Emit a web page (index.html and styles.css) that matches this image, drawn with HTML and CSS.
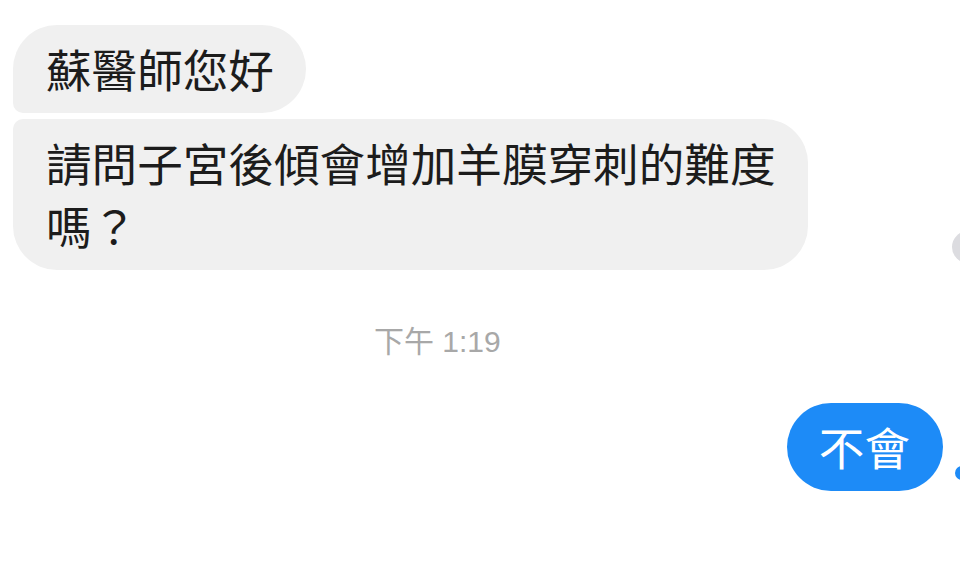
FILE: index.html
```html
<!DOCTYPE html>
<html lang="zh-Hant">

<head>
  <meta charset="UTF-8">
  <meta name="viewport" content="width=device-width, initial-scale=1.0">
  <title>Messenger</title>
  <link rel="stylesheet" href="styles.css">
</head>

<body>
  <div class="chat">
    <div class="bubble in first">蘇醫師您好</div>
    <div class="bubble in last">請問子宮後傾會增加羊膜穿刺的難度<br>嗎？</div>
    <span class="seen-avatar"></span>

    <div class="time">下午 1:19</div>

    <div class="bubble out">不會</div>
    <span class="sent-dot"></span>
  </div>
</body>

</html>
```

FILE: styles.css
```css
html,
body {
  margin: 0;
  padding: 0;
  background-color: #fff;
  overflow: hidden;
}

body {
  width: 960px;
  height: 588px;
  font-family: "Liberation Sans", "Noto Sans CJK TC", sans-serif;
}

.chat {
  position: relative;
  display: flex;
  flex-direction: column;
  padding: 25px 17px 0 13px;
}

.bubble {
  font-family: "Noto Sans CJK TC", sans-serif;
  font-size: 45.6px;
  line-height: 63px;
  padding: 12px 32px 13px 33px;
  border-radius: 44px;
}

.in {
  align-self: flex-start;
  background-color: #f0f0f0;
  color: #1c1c1c;
}

.in.first {
  border-bottom-left-radius: 10px;
}

.in.last {
  margin-top: 6px;
  border-top-left-radius: 10px;
}

.out {
  align-self: flex-end;
  margin-top: 43px;
  padding: 12px 33px 13px 32px;
  background-color: #1d8bf7;
  color: #fff;
}

.time {
  align-self: flex-start;
  margin-top: 54px;
  margin-left: 361px;
  font-size: 30px;
  line-height: 36px;
  color: #a8a8a8;
}

.seen-avatar {
  position: absolute;
  top: 231px;
  left: 952px;
  width: 32px;
  height: 32px;
  border-radius: 50%;
  background-color: #dcdce0;
}

.sent-dot {
  position: absolute;
  top: 466px;
  left: 955px;
  width: 14px;
  height: 14px;
  border-radius: 50%;
  background-color: #1d8bf7;
}
```
